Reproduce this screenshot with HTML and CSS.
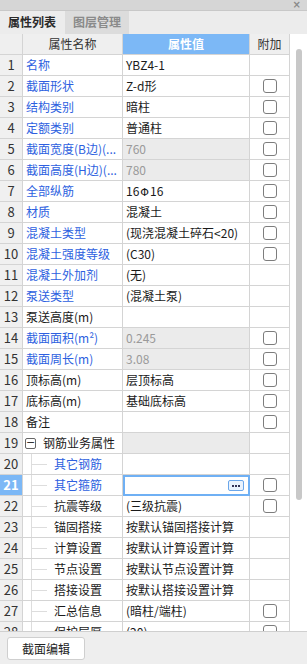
FILE: index.html
```html
<!DOCTYPE html>
<html lang="zh">
<head>
<meta charset="utf-8">
<link rel="stylesheet" href="styles.css">
</head>
<body>
<div class="panel">
  <div class="titlebar"><span class="close">×</span></div>
  <div class="tabs">
    <div class="tab active">属性列表</div>
    <div class="tab">图层管理</div>
  </div>
  <div class="gridwrap">
    <div class="grid">
      <div class="row head">
        <div class="c num"></div>
        <div class="c name center">属性名称</div>
        <div class="c val hl">属性值</div>
        <div class="c att center">附加</div>
      </div>
      <div class="row"><div class="c num">1</div><div class="c name blue">名称</div><div class="c val">YBZ4-1</div><div class="c att"></div></div>
      <div class="row"><div class="c num">2</div><div class="c name blue">截面形状</div><div class="c val">Z-d形</div><div class="c att"><span class="cb"></span></div></div>
      <div class="row"><div class="c num">3</div><div class="c name blue">结构类别</div><div class="c val">暗柱</div><div class="c att"><span class="cb"></span></div></div>
      <div class="row"><div class="c num">4</div><div class="c name blue">定额类别</div><div class="c val">普通柱</div><div class="c att"><span class="cb"></span></div></div>
      <div class="row"><div class="c num">5</div><div class="c name blue">截面宽度(B边)(...</div><div class="c val ro">760</div><div class="c att"><span class="cb"></span></div></div>
      <div class="row"><div class="c num">6</div><div class="c name blue">截面高度(H边)(...</div><div class="c val ro">780</div><div class="c att"><span class="cb"></span></div></div>
      <div class="row"><div class="c num">7</div><div class="c name blue">全部纵筋</div><div class="c val">16<span class="bar">Φ</span>16</div><div class="c att"><span class="cb"></span></div></div>
      <div class="row"><div class="c num">8</div><div class="c name blue">材质</div><div class="c val">混凝土</div><div class="c att"><span class="cb"></span></div></div>
      <div class="row"><div class="c num">9</div><div class="c name blue">混凝土类型</div><div class="c val">(现浇混凝土碎石&lt;20)</div><div class="c att"><span class="cb"></span></div></div>
      <div class="row"><div class="c num">10</div><div class="c name blue">混凝土强度等级</div><div class="c val">(C30)</div><div class="c att"><span class="cb"></span></div></div>
      <div class="row"><div class="c num">11</div><div class="c name blue">混凝土外加剂</div><div class="c val">(无)</div><div class="c att"></div></div>
      <div class="row"><div class="c num">12</div><div class="c name blue">泵送类型</div><div class="c val">(混凝土泵)</div><div class="c att"></div></div>
      <div class="row"><div class="c num">13</div><div class="c name">泵送高度(m)</div><div class="c val"></div><div class="c att"></div></div>
      <div class="row"><div class="c num">14</div><div class="c name blue">截面面积(m²)</div><div class="c val ro">0.245</div><div class="c att"><span class="cb"></span></div></div>
      <div class="row"><div class="c num">15</div><div class="c name blue">截面周长(m)</div><div class="c val ro">3.08</div><div class="c att"><span class="cb"></span></div></div>
      <div class="row"><div class="c num">16</div><div class="c name">顶标高(m)</div><div class="c val">层顶标高</div><div class="c att"><span class="cb"></span></div></div>
      <div class="row"><div class="c num">17</div><div class="c name">底标高(m)</div><div class="c val">基础底标高</div><div class="c att"><span class="cb"></span></div></div>
      <div class="row"><div class="c num">18</div><div class="c name">备注</div><div class="c val"></div><div class="c att"><span class="cb"></span></div></div>
      <div class="row"><div class="c num">19</div><div class="c name group"><span class="toggle">−</span><span class="gtext">钢筋业务属性</span></div><div class="c val ro"></div><div class="c att"></div></div>
      <div class="row"><div class="c num">20</div><div class="c name child blue">其它钢筋</div><div class="c val"></div><div class="c att"></div></div>
      <div class="row"><div class="c num sel">21</div><div class="c name child blue">其它箍筋</div><div class="c val edit"><span class="more"><i></i><i></i><i></i></span></div><div class="c att"><span class="cb"></span></div></div>
      <div class="row"><div class="c num">22</div><div class="c name child">抗震等级</div><div class="c val">(三级抗震)</div><div class="c att"><span class="cb"></span></div></div>
      <div class="row"><div class="c num">23</div><div class="c name child">锚固搭接</div><div class="c val">按默认锚固搭接计算</div><div class="c att"></div></div>
      <div class="row"><div class="c num">24</div><div class="c name child">计算设置</div><div class="c val">按默认计算设置计算</div><div class="c att"></div></div>
      <div class="row"><div class="c num">25</div><div class="c name child">节点设置</div><div class="c val">按默认节点设置计算</div><div class="c att"></div></div>
      <div class="row"><div class="c num">26</div><div class="c name child">搭接设置</div><div class="c val">按默认搭接设置计算</div><div class="c att"></div></div>
      <div class="row"><div class="c num">27</div><div class="c name child">汇总信息</div><div class="c val">(暗柱/端柱)</div><div class="c att"><span class="cb"></span></div></div>
      <div class="row"><div class="c num">28</div><div class="c name child">保护层厚...</div><div class="c val">(20)</div><div class="c att"><span class="cb"></span></div></div>
    </div>
    <div class="scroll"><div class="thumb"></div></div>
  </div>
  <div class="footer">
    <button class="btn">截面编辑</button>
  </div>
</div>
</body>
</html>
```
FILE: styles.css
```css
* { box-sizing: border-box; }
html, body { margin: 0; padding: 0; }
body {
  width: 307px;
  height: 664px;
  overflow: hidden;
  background: #eeeeee;
  font-family: "Noto Sans CJK SC", "Noto Sans", sans-serif;
  font-size: 12px;
  color: #1a1a1a;
}
.panel { display: flex; flex-direction: column; height: 664px; }
.titlebar {
  height: 11px;
  background: #d6d6d6;
  border-bottom: 1px solid #c8c8c8;
  display: flex;
  justify-content: flex-end;
  align-items: center;
  padding-right: 6px;
}
.close { font-size: 10px; line-height: 10px; height: 10px; color: #8a8a8a; font-family: "DejaVu Sans", sans-serif; font-weight: bold; }
.tabs {
  height: 23px;
  background: #ececec;
  display: flex;
}
.tab {
  width: 65px;
  height: 23px;
  line-height: 22px;
  text-align: center;
  font-weight: bold;
  font-size: 12px;
  color: #8a8a8a;
  background: #dcdcdc;
  border-right: 1px solid #ececec;
}
.tab.active { background: #ececec; color: #2a2a2a; width: 65px; }
.gridwrap {
  height: 598px;
  display: flex;
  background: #ffffff;
  border-bottom: 1px solid #cfcfcf;
}
.grid { width: 290px; height: 597px; overflow: hidden; }
.row {
  display: grid;
  grid-template-columns: 23px 100px 127px 40px;
  height: 21px;
}
.c {
  height: 21px;
  line-height: 20px;
  border-right: 1px solid #d4d4d4;
  border-bottom: 1px solid #d4d4d4;
  background: #fff;
  white-space: nowrap;
  overflow: hidden;
  position: relative;
}
.num { background: #f0f0f0; text-align: center; color: #333; font-size: 13px; }
.name { padding-left: 3px; }
.val { padding-left: 3px; }
.center { text-align: center; padding-left: 0; }
.head .c { background: #efefef; color: #333; }
.head .hl { background: #7cb8f6; color: #fff; font-weight: bold; text-align: center; padding-left: 0; }
.blue { color: #2d5fe0; }
.ro { background: #ebebeb; color: #9a9a9a; }
.att { display: flex; align-items: center; justify-content: center; }
.cb {
  width: 14px;
  height: 14px;
  border: 1px solid #7d7d7d;
  border-radius: 3px;
  background: #fff;
}
.bar { font-family: "DejaVu Sans", sans-serif; font-size: 11px; padding: 0 1px; }
.group { display: flex; align-items: center; padding-left: 2px; }
.toggle {
  width: 11px;
  height: 11px;
  border: 1px solid #666;
  border-radius: 2px;
  font-size: 11px;
  line-height: 8px;
  text-align: center;
  color: #333;
  font-family: "DejaVu Sans", sans-serif;
}
.gtext { margin-left: 7px; }
.child { padding-left: 31px; }
.child::before {
  content: "";
  position: absolute;
  left: 8px;
  top: -1px;
  bottom: -1px;
  border-left: 1px solid #dddddd;
}
.child::after {
  content: "";
  position: absolute;
  left: 9px;
  width: 15px;
  top: 10px;
  border-top: 1px solid #dddddd;
}
.sel { background: #7cb8f6; color: #fff; font-weight: bold; }
.edit {
  border: 2px solid #6fb0f4;
  display: flex;
  align-items: center;
  justify-content: flex-end;
  padding-right: 4px;
}
.more {
  width: 16px;
  height: 11px;
  border: 1px solid #6aa6ea;
  border-radius: 2px;
  background: #eaf3fd;
  display: flex;
  align-items: center;
  justify-content: center;
  gap: 1px;
}
.more i { width: 2px; height: 2px; background: #335; display: block; }
.scroll {
  width: 17px;
  height: 597px;
  background: #ffffff;
  padding-top: 15px;
  padding-left: 6px;
}
.thumb {
  width: 6px;
  height: 451px;
  background: #c8c8c8;
  border-radius: 3px;
}
.footer { padding: 5px 0 0 7px; }
.btn {
  width: 78px;
  height: 23px;
  border: 1px solid #cfcfcf;
  border-radius: 3px;
  background: #fff;
  font-family: "Noto Sans CJK SC", sans-serif;
  font-size: 12px;
  color: #222;
  padding: 0;
  line-height: 20px;
}
```
